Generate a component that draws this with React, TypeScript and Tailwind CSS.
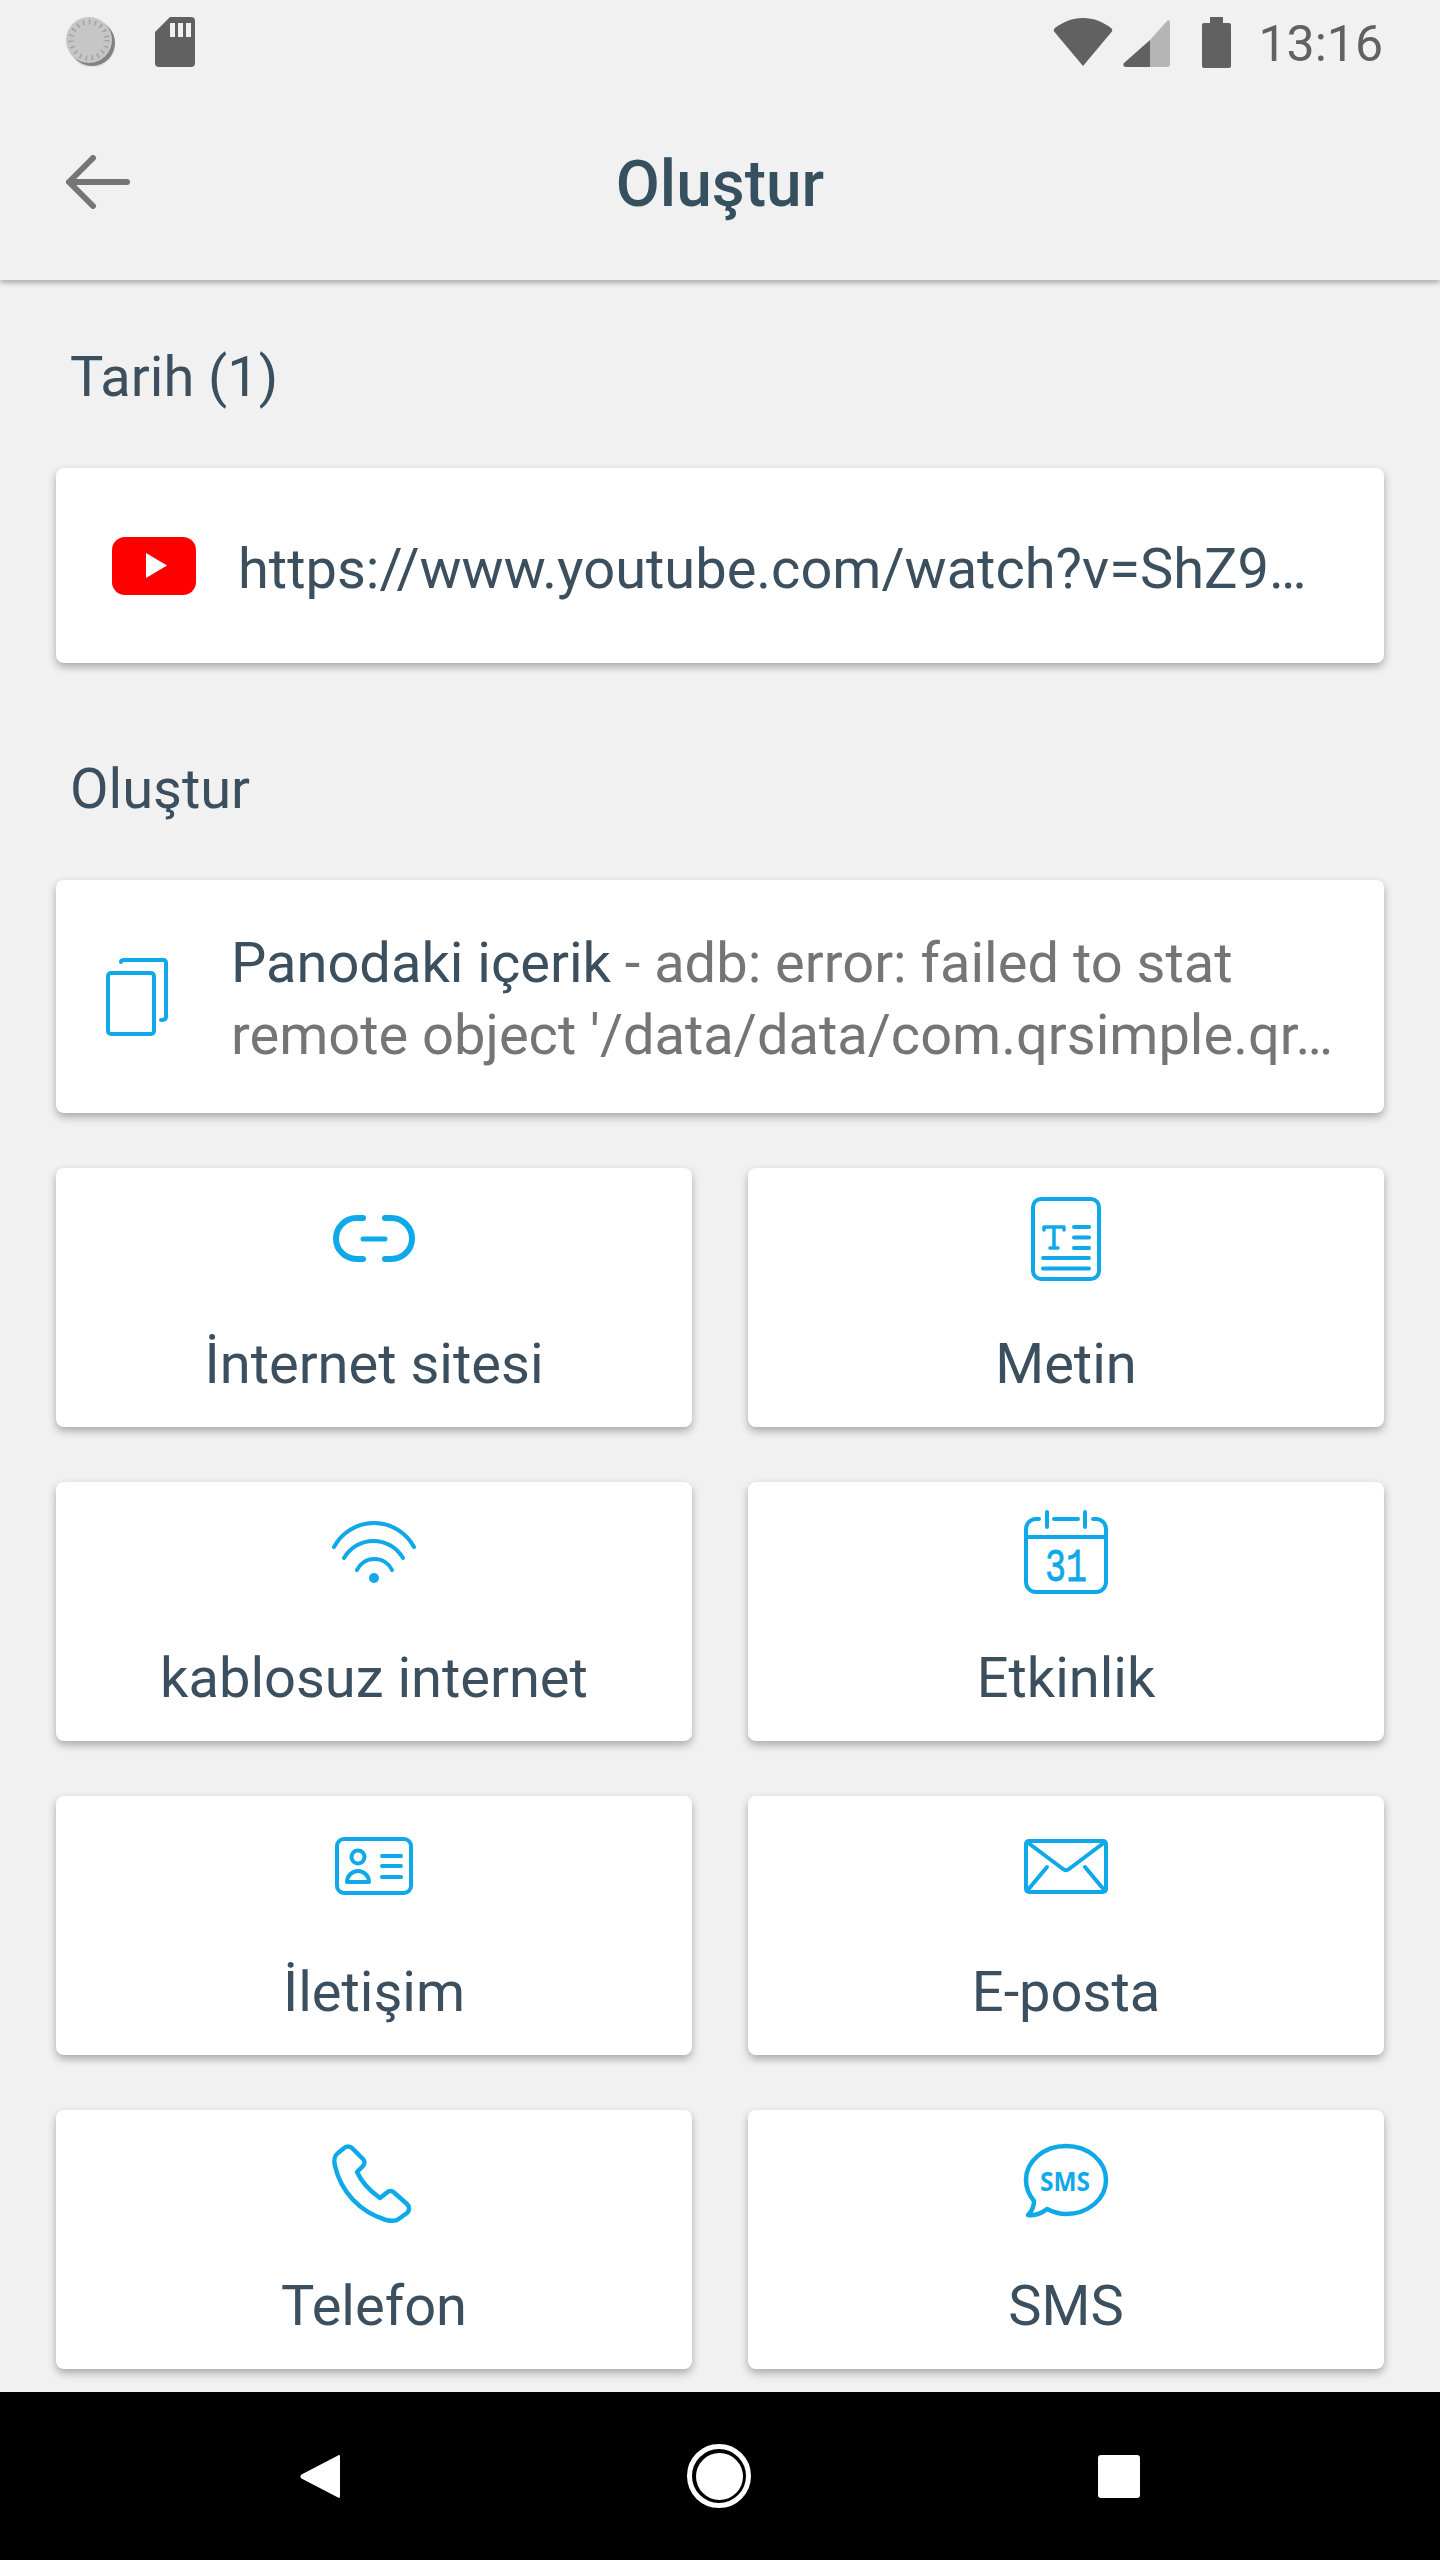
import type { ReactNode } from 'react';

function StatusBar() {
  return (
    <div className="flex h-[84px] items-center justify-between pl-[66px] pr-[57px]">
      <div className="flex items-center gap-[40px]">
        <svg width="49" height="50" viewBox="0 0 49 50">
          <circle cx="26" cy="26" r="23" fill="#616161" />
          <circle cx="26" cy="27" r="23.5" fill="#bdbdbd" fillOpacity="0.35" />
          <circle cx="23" cy="23" r="23" fill="#c6c6c6" />
          <circle cx="23" cy="23" r="18" fill="none" stroke="#a3a3a3" strokeWidth="5" strokeDasharray="1.6 4.4" />
        </svg>
        <svg width="40" height="50" viewBox="0 0 40 50">
          <path d="M15 0H36a4 4 0 0 1 4 4V46a4 4 0 0 1-4 4H4a4 4 0 0 1-4-4V15Z" fill="#616161" />
          <path d="M15 6h5v14h-5zM23 6h5v14h-5zM31 6h5v14h-5z" fill="#f1f1f1" />
        </svg>
      </div>
      <div className="flex items-center">
        <svg width="60" height="48" viewBox="0 0 60 48">
          <path d="M30 48 1.500 14A3 3 0 0 1 2 10C10 4 19 0 30 0S50 4 58 10a3 3 0 0 1 .5 4Z" fill="#616161" />
        </svg>
        <svg className="ml-[10px] mt-[3px]" width="47" height="47" viewBox="0 0 47 47">
          <path d="M47 3V44a3 3 0 0 1-3 3H27V20L44 1C45.500-.5 47 .5 47 3Z" fill="#b5b5b5" />
          <path d="M27 20V47H3C.5 47-.5 45 1 43Z" fill="#616161" />
        </svg>
        <svg className="ml-[32px]" width="29" height="51" viewBox="0 0 29 51">
          <path d="M8 0H21V6H27a2 2 0 0 1 2 2V49a2 2 0 0 1-2 2H2a2 2 0 0 1-2-2V8a2 2 0 0 1 2-2H8Z" fill="#616161" />
        </svg>
        <span className="ml-[27px] mt-[3px] text-[50px] leading-none text-[#616161]">13:16</span>
      </div>
    </div>
  );
}

function Header() {
  return (
    <header className="relative z-10 bg-[#f1f1f1] shadow-[0_3px_5px_rgba(0,0,0,0.28)]">
      <StatusBar />
      <div className="grid h-[196px] grid-cols-[1fr_auto_1fr] items-center">
        <svg className="ml-[66px]" width="64" height="54" viewBox="0 0 64 54" fill="none" stroke="#757575" strokeWidth="6" strokeLinecap="round" strokeLinejoin="round">
          <path d="M61 27H3M27 3 3 27l24 24" />
        </svg>
        <h1 className="pt-[6px] text-[64px] font-medium leading-none text-[#37505f]">Oluştur</h1>
      </div>
    </header>
  );
}

function Card({ className, children }: { className: string; children: ReactNode }) {
  return (
    <div className={`rounded-[8px] bg-white shadow-[0_4px_8px_rgba(0,0,0,0.3)] ${className}`}>
      {children}
    </div>
  );
}

function SectionLabel({ className, children }: { className: string; children: ReactNode }) {
  return <h2 className={`h-[66px] pl-[14px] text-[56px] leading-[66px] text-[#3b4f5e] ${className}`}>{children}</h2>;
}

const iconProps = {
  width: 96,
  height: 96,
  viewBox: '0 0 96 96',
  fill: 'none',
  stroke: '#0fa9e9',
  strokeWidth: 4,
  strokeLinecap: 'round' as const,
  strokeLinejoin: 'round' as const,
};

function LinkIcon() {
  return (
    <svg {...iconProps} strokeWidth={6}>
      <path d="M37 27h-6.500a20.500 20.500 0 0 0 0 41H37M59 27h6.500a20.500 20.500 0 0 1 0 41H59" />
      <path d="M37 48H59" strokeWidth={5} />
    </svg>
  );
}

function TextIcon() {
  return (
    <svg {...iconProps}>
      <rect x="15" y="8" width="66" height="80" rx="8" />
      <path d="M26 39V36H46V39M36 36V57M32 57H40" strokeWidth={3.5} />
      <path d="M56 36H71M56 46.500H71M56 57H71M25 67H71M25 77.500H71" />
    </svg>
  );
}

function WifiIcon() {
  return (
    <svg {...iconProps}>
      <path d="M8 42A45.300 45.300 0 0 1 88 42M18 53A34 34 0 0 1 77 53M31 65A19.400 19.400 0 0 1 66 65" />
      <circle cx="48" cy="73" r="5" fill="#0fa9e9" stroke="none" />
    </svg>
  );
}

function CalendarIcon() {
  return (
    <svg {...iconProps}>
      <path d="M21 14H18A10 10 0 0 0 8 24V77A10 10 0 0 0 18 87H78A10 10 0 0 0 88 77V24A10 10 0 0 0 78 14H75M29 7V22M67 7V22M36 14H60M8 32H88" />
      <text x="27" y="76" fontSize="46" textLength="42" lengthAdjust="spacingAndGlyphs" fill="#0fa9e9" stroke="#0fa9e9" strokeWidth="0.8" className="font-['Liberation_Mono',monospace]">
        31
      </text>
    </svg>
  );
}

function ContactIcon() {
  return (
    <svg {...iconProps}>
      <rect x="11" y="20" width="74" height="54" rx="7" />
      <circle cx="32" cy="38" r="6.500" />
      <path d="M21 63a11 11 0 0 1 22 0ZM56 37H75M56 47H75M56 58H75" />
    </svg>
  );
}

function MailIcon() {
  return (
    <svg {...iconProps}>
      <rect x="8" y="22" width="80" height="51" rx="3" />
      <path d="M9 23 45 50a5 5 0 0 0 6 0L87 23M29 48 9 72M67 48 87 72" />
    </svg>
  );
}

function PhoneIcon() {
  return (
    <svg {...iconProps} strokeWidth={4.5}>
      <path d="M17.500 15.500a6 6 0 0 1 9 0L37 26a5 5 0 0 1 0 7L31 39C36 50 44 58 54 65L61 59.500a5 5 0 0 1 7 0L81 71a6 6 0 0 1 0 9L74 85C71 88 66 88.500 60 87 34 79 15 59 9 33 7.500 27 9 22 12 20Z" />
    </svg>
  );
}

function SmsIcon() {
  return (
    <svg {...iconProps} strokeWidth={4.5}>
      <path d="M16 68C11 62 8 55 8 47 8 28 26 13 48 13S88 28 88 47 70 81 48 81C41 81 35 79 29 76 24 80 17 83 10 82 14 78 16 73 16 68Z" />
      <text x="22" y="58" fontSize="27" fontWeight="700" textLength="50" lengthAdjust="spacingAndGlyphs" fill="#0fa9e9" stroke="none" className="font-['Open_Sans',sans-serif]">
        SMS
      </text>
    </svg>
  );
}

const actions = [
  { label: 'İnternet sitesi', icon: <LinkIcon /> },
  { label: 'Metin', icon: <TextIcon /> },
  { label: 'kablosuz internet', icon: <WifiIcon /> },
  { label: 'Etkinlik', icon: <CalendarIcon /> },
  { label: 'İletişim', icon: <ContactIcon /> },
  { label: 'E-posta', icon: <MailIcon /> },
  { label: 'Telefon', icon: <PhoneIcon /> },
  { label: 'SMS', icon: <SmsIcon /> },
];

function ActionCard({ label, icon }: { label: string; icon: ReactNode }) {
  return (
    <Card className="flex h-[259px] flex-col items-center pt-[23px]">
      {icon}
      <span className="mt-[44px] text-[56px] leading-[66px] text-[#3b4f5e]">{label}</span>
    </Card>
  );
}

function NavBar() {
  return (
    <nav className="flex h-[168px] shrink-0 items-center justify-center gap-[347px] bg-black">
      <svg width="40" height="45" viewBox="0 0 40 45">
        <path d="M38 1.500C39 .5 40 1 40 3V42C40 44 39 44.500 38 43.500L1.500 24.500C0 23.500 0 21.500 1.500 20.500Z" fill="#fff" />
      </svg>
      <div className="flex h-[64px] w-[64px] items-center justify-center rounded-full border-[5px] border-white">
        <div className="h-[47px] w-[47px] rounded-full bg-white" />
      </div>
      <div className="h-[43px] w-[42px] rounded-[3px] bg-white" />
    </nav>
  );
}

export default function App() {
  return (
    <div className="flex h-[2560px] w-[1440px] flex-col overflow-hidden bg-[#f1f1f1] font-['Roboto',sans-serif]">
      <Header />
      <main className="min-h-0 flex-1 px-[56px] pt-[64px]">
        <SectionLabel className="">Tarih (1)</SectionLabel>
        <Card className="mt-[58px] flex h-[195px] items-center pl-[56px]">
          <svg width="84" height="58" viewBox="0 0 84 58">
            <rect width="84" height="58" rx="13" fill="#ff0000" />
            <path d="M34 16V41L55 28.500Z" fill="#fff" />
          </svg>
          <span className="ml-[42px] pt-[6px] text-[56px] leading-none text-[#3b4f5e]">https://www.youtube.com/watch?v=ShZ9…</span>
        </Card>
        <SectionLabel className="mt-[93px]">Oluştur</SectionLabel>
        <Card className="mt-[58px] flex h-[233px] items-center pl-[49px]">
          <svg width="64" height="80" viewBox="0 0 64 80" fill="none" stroke="#0fa9e9" strokeWidth="4" strokeLinecap="round" strokeLinejoin="round">
            <rect x="3" y="16" width="46" height="61" rx="3" />
            <path d="M16 5Q16 3 19 3H58Q61 3 61 6V60Q61 63 56 63" />
          </svg>
          <p className="ml-[62px] pt-[4px] text-[56px] leading-[72px] text-[#757575]">
            <span className="text-[#3b4f5e]">Panodaki içerik</span> - adb: error: failed to stat
            <br />
            remote object '/data/data/com.qrsimple.qr…
          </p>
        </Card>
        <div className="mt-[55px] grid grid-cols-2 gap-x-[56px] gap-y-[55px]">
          {actions.map((action) => (
            <ActionCard key={action.label} label={action.label} icon={action.icon} />
          ))}
        </div>
      </main>
      <NavBar />
    </div>
  );
}
